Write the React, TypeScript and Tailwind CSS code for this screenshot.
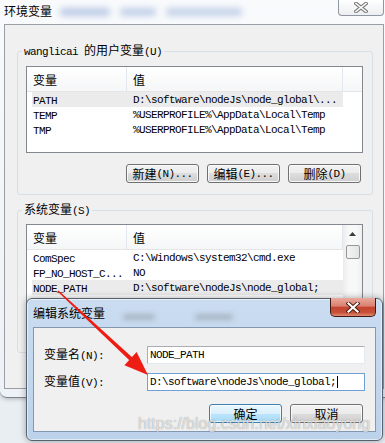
import type { ReactNode } from "react";

const mono = "font-['Liberation_Mono',monospace] text-[11px] tracking-[-0.6px]";

function M({ children }: { children: ReactNode }) {
  return <span className={mono}>{children}</span>;
}

function WinButton({ children, primary = false }: { children: ReactNode; primary?: boolean }) {
  return (
    <div
      className={
        primary
          ? "flex h-[19px] w-[73px] items-center justify-center whitespace-nowrap rounded-[3px] border border-[#3c7fb1] bg-[linear-gradient(#eaf6fd_0%,#d9f0fc_50%,#bee6fd_50%,#a7d9f5_100%)] shadow-[inset_0_0_0_1px_rgba(255,255,255,0.7)]"
          : "flex h-[19px] w-[73px] items-center justify-center whitespace-nowrap rounded-[3px] border border-[#707070] bg-[linear-gradient(#f2f2f2_0%,#ebebeb_50%,#dddddd_50%,#cfcfcf_100%)] shadow-[inset_0_0_0_1px_rgba(255,255,255,0.8)]"
      }
    >
      {children}
    </div>
  );
}

type Row = { name: string; value: string; selected?: boolean };

const userVars: Row[] = [
  { name: "PATH", value: "D:\\software\\nodeJs\\node_global\\...", selected: true },
  { name: "TEMP", value: "%USERPROFILE%\\AppData\\Local\\Temp" },
  { name: "TMP", value: "%USERPROFILE%\\AppData\\Local\\Temp" },
];

const sysVars: Row[] = [
  { name: "ComSpec", value: "C:\\Windows\\system32\\cmd.exe" },
  { name: "FP_NO_HOST_C...", value: "NO" },
  { name: "NODE_PATH", value: "D:\\software\\nodeJs\\node_global;", selected: true },
];

function ListHeader() {
  return (
    <div className="flex h-[25px] shrink-0 border-b border-[#e5e5e5] bg-[linear-gradient(#ffffff,#f5f6f7)]">
      <div className="flex w-[100px] items-center border-r border-[#e3e8ee] pl-[6px] pt-[2px]">变量</div>
      <div className="flex w-[216px] items-center border-r border-[#e3e8ee] pl-[6px] pt-[2px]">值</div>
    </div>
  );
}

function ListRows({ rows }: { rows: Row[] }) {
  return (
    <>
      {rows.map((r) => (
        <div
          key={r.name}
          className={`ml-[5px] flex h-[15px] w-[311px] items-center whitespace-nowrap ${r.selected ? "bg-[#ebebeb]" : ""}`}
        >
          <div className="w-[101px] pl-[1px]">
            <M>{r.name}</M>
          </div>
          <M>{r.value}</M>
        </div>
      ))}
    </>
  );
}

function Buttons() {
  return (
    <div className="mt-[11px] flex justify-end gap-[8px] pr-[11px]">
      <WinButton>
        新建<M>(N)...</M>
      </WinButton>
      <WinButton>
        编辑<M>(E)...</M>
      </WinButton>
      <WinButton>
        删除<M>(D)</M>
      </WinButton>
    </div>
  );
}

export default function App() {
  return (
    <div className="relative h-[443px] w-[385px] overflow-hidden bg-[#e9eef3] font-['Noto_Sans_CJK_SC',sans-serif] text-[12px] leading-[14px] text-black">
      {/* main window */}
      <div className="flex h-[398px] w-[385px] flex-col rounded-bl-[7px] border-b border-[#7b8591] bg-[linear-gradient(#f8fafc,#eef2f6)] shadow-[0_1px_4px_rgba(0,0,0,0.25)]">
        <div className="flex h-[24px] shrink-0 items-start">
          <span className="ml-[4px] mt-[4px]">环境变量</span>
          <div className="ml-[8px] mt-[8px] flex gap-[10px]">
            <div className="h-[8px] w-[50px] rounded-full bg-[#bccbe6] blur-[3px]" />
            <div className="h-[8px] w-[36px] rounded-full bg-[#c2d0e8] blur-[3px]" />
            <div className="h-[8px] w-[76px] rounded-full bg-[#c4d2e9] blur-[3px]" />
          </div>
          <div className="ml-auto mr-[1px] flex h-[16px] w-[46px] items-center justify-center rounded-b-[4px] border border-t-0 border-[#8d96a2] bg-[linear-gradient(#ffffff,#eceef1)]">
            <svg width="14" height="11" viewBox="0 0 14 11">
              <path d="M2 1.5 L12 9.5 M12 1.5 L2 9.5" stroke="#7c7c7c" strokeWidth="3.6" strokeLinecap="square" />
              <path d="M2 1.5 L12 9.5 M12 1.5 L2 9.5" stroke="#ffffff" strokeWidth="1.6" strokeLinecap="square" />
            </svg>
          </div>
        </div>

        <div className="ml-[4px] h-[365px] w-[380px] border border-[#9a9fa5] bg-[#f0f0f0]">
          <fieldset className="ml-[12px] mt-[18px] w-[356px] rounded-[3px] border border-[#d5dfe5] pb-[11px]">
            <legend className="ml-[4px] whitespace-nowrap px-[2px]">
              <M>wanglicai </M>的用户变量<M>(U)</M>
            </legend>
            <div className="ml-[8px] mt-[7px] h-[87px] w-[337px] border border-[#828790] bg-white">
              <ListHeader />
              <ListRows rows={userVars} />
            </div>
            <Buttons />
          </fieldset>

          <fieldset className="ml-[12px] mt-[7px] w-[356px] rounded-[3px] border border-[#d5dfe5] pb-[11px]">
            <legend className="ml-[4px] whitespace-nowrap px-[2px]">
              系统变量<M>(S)</M>
            </legend>
            <div className="ml-[8px] mt-[6px] flex h-[87px] w-[337px] border border-[#828790] bg-white">
              <div className="w-[316px]">
                <ListHeader />
                <ListRows rows={sysVars} />
              </div>
              <div className="flex w-[19px] flex-col items-center bg-[linear-gradient(to_right,#ececec,#f8f8f8_30%,#f8f8f8_70%,#efefef)]">
                <div className="flex h-[17px] items-center justify-center">
                  <svg width="7" height="4" viewBox="0 0 7 4">
                    <path d="M0 4 L3.5 0 L7 4 Z" fill="#3c3c3c" />
                  </svg>
                </div>
                <div className="mt-[3px] h-[14px] w-[14px] rounded-[2px] border border-[#979797] bg-[linear-gradient(to_right,#f4f4f4,#e4e4e4)]" />
                <div className="mt-auto flex h-[17px] items-center justify-center">
                  <svg width="7" height="4" viewBox="0 0 7 4">
                    <path d="M0 0 L3.5 4 L7 0 Z" fill="#3c3c3c" />
                  </svg>
                </div>
              </div>
            </div>
            <Buttons />
          </fieldset>
        </div>
      </div>

      {/* edit dialog */}
      <div className="absolute left-[26px] top-[298px] flex h-[143px] w-[357px] flex-col rounded-[6px] border border-[#56626f] bg-[linear-gradient(#cadcf0,#bcd2ea)] shadow-[inset_0_0_0_1px_rgba(255,255,255,0.55),0_0_7px_rgba(0,0,0,0.35)]">
        <div className="flex h-[28px] shrink-0 items-start">
          <span className="ml-[6px] mt-[7px]">编辑系统变量</span>
          <div className="ml-[18px] mt-[15px] flex gap-[40px]">
            <div className="h-[6px] w-[32px] rounded-full bg-[#aab7c6] blur-[2.5px]" />
            <div className="h-[6px] w-[38px] rounded-full bg-[#aab7c6] blur-[2.5px]" />
          </div>
          <div className="ml-auto mr-[6px] mt-[-1px] flex h-[19px] w-[46px] items-center justify-center rounded-b-[5px] border border-t-0 border-[#3f1a14] bg-[linear-gradient(#eaaa9e_0%,#d9806f_45%,#c3442f_52%,#c85038_80%,#e08a72_100%)]">
            <svg width="14" height="11" viewBox="0 0 14 11">
              <path d="M2.5 1.5 L11.5 9.5 M11.5 1.5 L2.5 9.5" stroke="#4a1a12" strokeWidth="4" strokeLinecap="square" />
              <path d="M2.5 1.5 L11.5 9.5 M11.5 1.5 L2.5 9.5" stroke="#ffffff" strokeWidth="2.2" strokeLinecap="square" />
            </svg>
          </div>
        </div>
        <div className="px-[6px] pb-[8px]">
          <div className="h-[105px] border border-[#8298b0] bg-[#f0f0f0] pl-[10px] pr-[10px] pt-[18px]">
            <div className="flex h-[18px] items-center">
              <div className="w-[103px] whitespace-nowrap">
                变量名<M>(N):</M>
              </div>
              <div className="flex h-[18px] w-[218px] items-center border border-[#abadb3] border-b-[#e3e9ef] border-r-[#e3e9ef] bg-white pl-[2px]">
                <M>NODE_PATH</M>
              </div>
            </div>
            <div className="mt-[9px] flex h-[18px] items-center">
              <div className="w-[103px] whitespace-nowrap">
                变量值<M>(V):</M>
              </div>
              <div className="flex h-[18px] w-[218px] items-center whitespace-nowrap border border-[#6fa0d8] bg-white pl-[2px]">
                <M>D:\software\nodeJs\node_global;</M>
                <div className="ml-[1px] h-[12px] w-[1px] bg-black" />
              </div>
            </div>
            <div className="mt-[13px] flex justify-end gap-[8px] pr-[2px]">
              <WinButton primary>确定</WinButton>
              <WinButton>取消</WinButton>
            </div>
          </div>
        </div>
      </div>

      {/* watermark */}
      <div className="absolute left-[138px] top-[416px] whitespace-nowrap font-['Liberation_Sans',sans-serif] text-[16px] leading-[16px] text-white/70 [text-shadow:0_0_1px_rgba(0,0,0,0.45)]">
        https://blog.csdn.net/xinxiaoyong
      </div>

      {/* red arrow */}
      <svg className="pointer-events-none absolute left-0 top-0" width="385" height="443">
        <polygon points="57.5,291.5 58.5,290.5 132.4,357.5 129.6,360.5" fill="#ee1d14" />
        <polygon points="148,375 124.4,365.2 136.6,352" fill="#ee1d14" />
      </svg>
    </div>
  );
}
